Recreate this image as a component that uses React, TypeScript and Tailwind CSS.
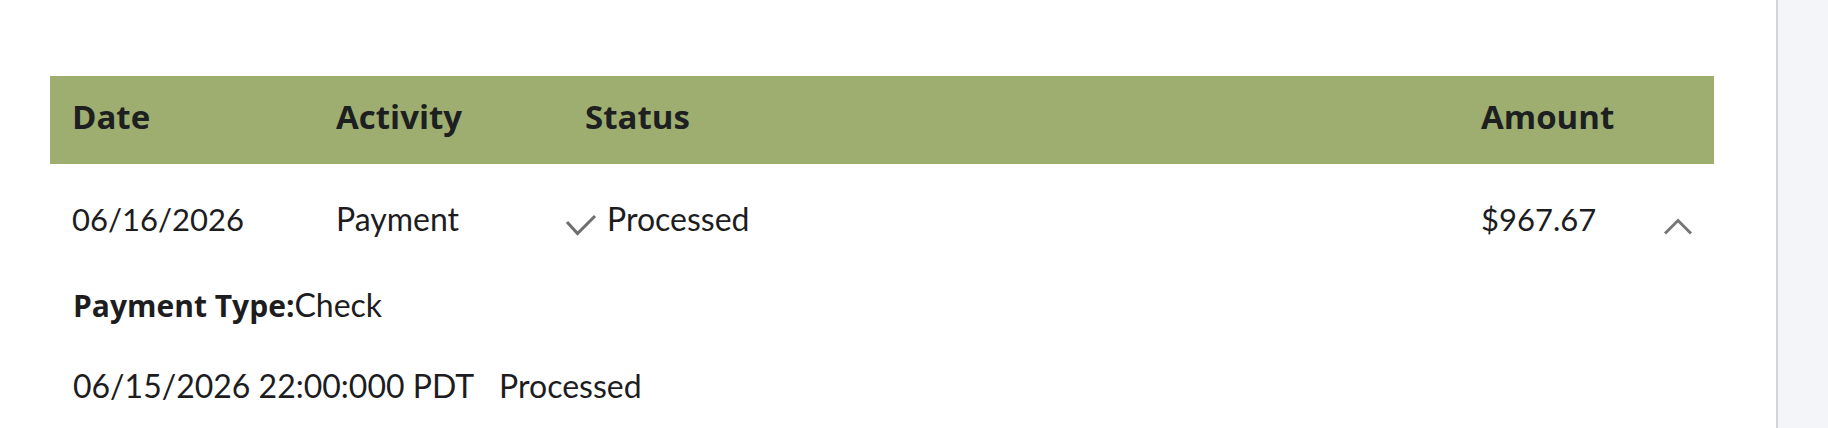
const rowText = "text-[31px] leading-[40px] text-[#1d1d1f]";

const App = () => {
  return (
    <div className="flex h-[428px] w-full bg-white font-['Lato','Liberation_Sans',sans-serif] overflow-hidden">
      {/* Main content */}
      <div className="flex-1 pl-[50px] pr-[62px] pt-[76px]">
        {/* Header */}
        <div className="grid grid-cols-[264px_249px_1fr_190px_65px] h-[88px] bg-[#9dae70] pt-[21px] font-['Open_Sans','Lato',sans-serif] text-[33px] leading-[40px] font-bold text-[#1d1f20]">
          <div className="pl-[22px]">Date</div>
          <div className="pl-[22px]">Activity</div>
          <div className="pl-[22px]">Status</div>
          <div className="pl-[22px]">Amount</div>
          <div />
        </div>

        {/* Row */}
        <div className={`grid grid-cols-[264px_249px_1fr_190px_65px] pt-[35px] ${rowText}`}>
          <div className="pl-[22px]">06/16/2026</div>
          <div className="pl-[22px] text-[32px]">Payment</div>
          <div className="flex items-start pl-[2px]">
            <svg width="32" height="22" viewBox="0 0 32 22" className="mt-[15px] mr-[10px] shrink-0">
              <polyline points="2,8 12.5,19.5 30,2" fill="none" stroke="#6f6f6f" strokeWidth="3" />
            </svg>
            <span className="text-[32px]">Processed</span>
          </div>
          <div className="pl-[22px]">$967.67</div>
          <div className="pl-[14px] pt-[19px]">
            <svg width="30" height="18" viewBox="0 0 30 18">
              <polyline points="2,15.5 15,2.5 28,15.5" fill="none" stroke="#777777" strokeWidth="3" />
            </svg>
          </div>
        </div>

        {/* Details */}
        <div className="pl-[23px] pt-[46px] text-[32px] leading-[40px] text-[#1d1d1f]">
          <div>
            <span className="font-bold font-['Open_Sans','Lato',sans-serif] text-[30px]">Payment Type:</span>Check
          </div>
          <div className="pt-[40px] flex gap-[25px]">
            <span>06/15/2026 22:00:000 PDT</span>
            <span>Processed</span>
          </div>
        </div>
      </div>

      {/* Side panel */}
      <div className="w-[52px] border-l-2 border-[#d5d5d7] bg-[#f4f5f9]" />
    </div>
  );
};

export default App;
